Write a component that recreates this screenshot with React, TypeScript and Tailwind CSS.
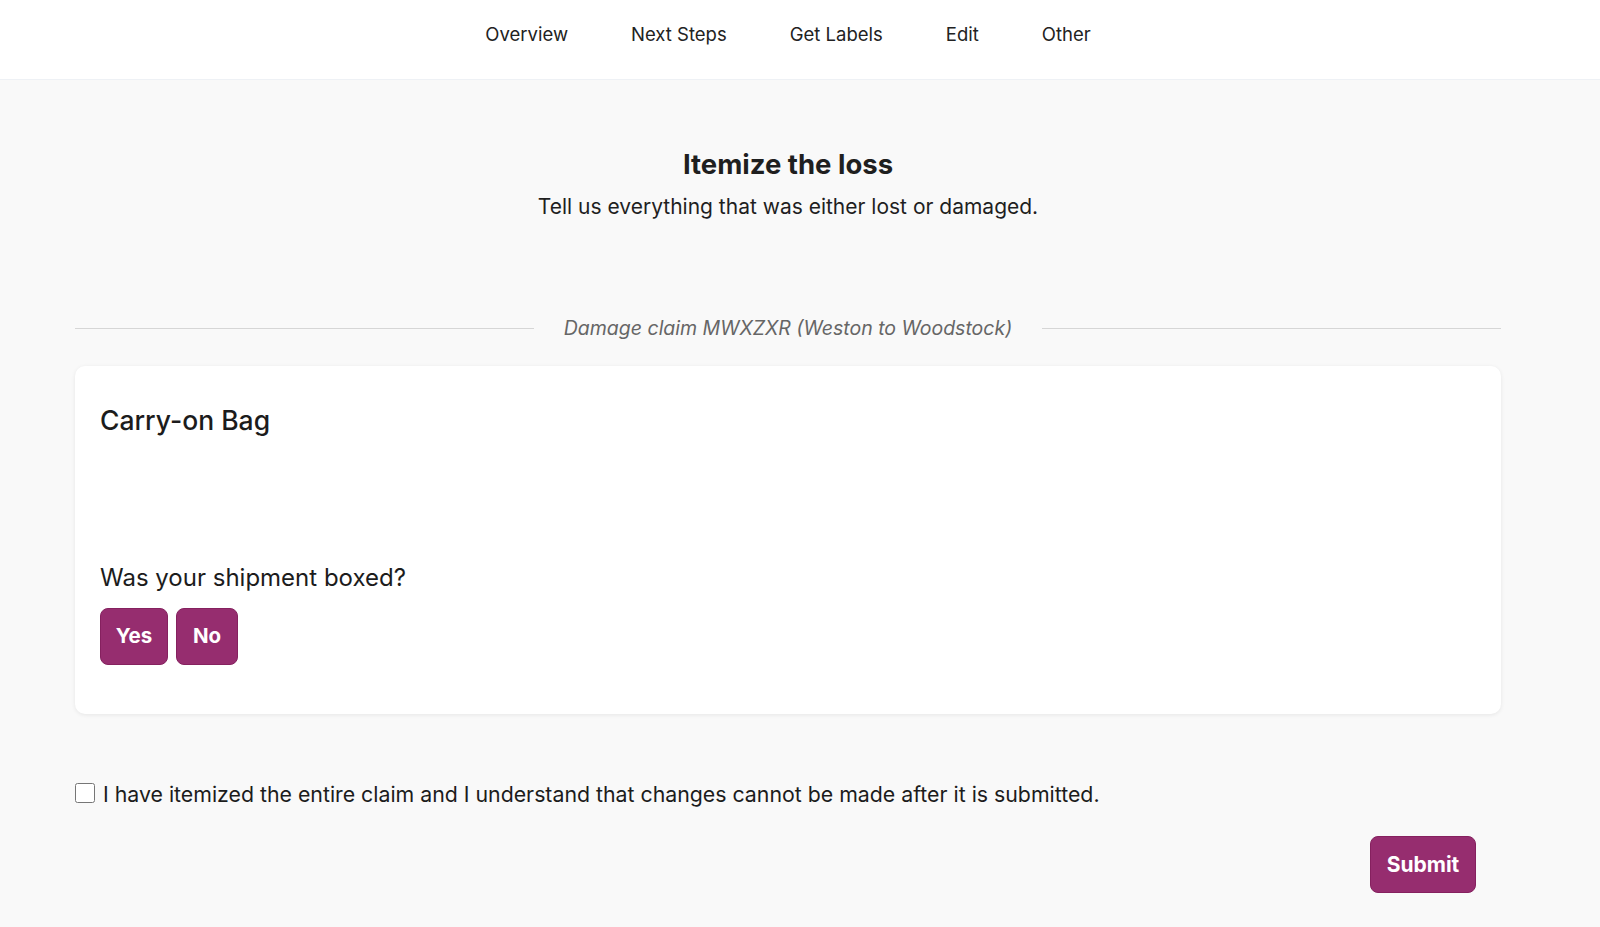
import { useState } from 'react';

const navItems = ['Overview', 'Next Steps', 'Get Labels', 'Edit', 'Other'];

export default function App() {
  const [agreed, setAgreed] = useState(false);

  return (
    <div className="min-h-[927px] bg-[#f9f9f9] text-[#1c1c1c]" style={{ fontFamily: 'Inter, "Noto Sans", sans-serif' }}>
      <header className="h-[80px] bg-white border-b border-[#eef1f5]">
        <nav className="w-[1576px] h-full flex items-start justify-center gap-[63px] pt-[22px]">
          {navItems.map((item) => (
            <a key={item} href="#" className="text-[18.5px] leading-[24px] text-[#222]">
              {item}
            </a>
          ))}
        </nav>
      </header>

      <main className="w-[1576px] px-[75px]">
        <div className="pt-[67px] text-center">
          <h1 className="text-[27.5px] leading-[34px] font-bold text-[#1f1f1f]">Itemize the loss</h1>
          <p className="mt-[12px] text-[21px] leading-[28px] text-[#1f1f1f]">
            Tell us everything that was either lost or damaged.
          </p>
        </div>

        <div className="mt-[94px] flex items-center gap-[30px]">
          <div className="flex-1 h-px bg-[#d6d6d6]" />
          <span className="text-[19.5px] leading-[26px] italic text-[#666]">
            Damage claim MWXZXR (Weston to Woodstock)
          </span>
          <div className="flex-1 h-px bg-[#d6d6d6]" />
        </div>

        <section className="mt-[25px] h-[348px] bg-white rounded-[10px] shadow-[0_1px_4px_rgba(0,0,0,0.08)] px-[25px] pt-[37px]">
          <h2 className="text-[26.5px] leading-[34px] font-medium text-[#1c1c1c]">Carry-on Bag</h2>
          <p className="mt-[125px] text-[24px] leading-[32px] text-[#1c1c1c]">Was your shipment boxed?</p>
          <div className="mt-[14px] flex gap-[8px]">
            <button className="w-[68px] h-[57px] rounded-[8px] bg-[#962d6f] border border-[#85215f] text-white text-[20.5px] font-bold">
              Yes
            </button>
            <button className="w-[62px] h-[57px] rounded-[8px] bg-[#962d6f] border border-[#85215f] text-white text-[20.5px] font-bold">
              No
            </button>
          </div>
        </section>

        <label className="mt-[66px] flex items-center gap-[8px] cursor-pointer">
          <input
            type="checkbox"
            checked={agreed}
            onChange={(e) => setAgreed(e.target.checked)}
            className="w-[20px] h-[20px] -mt-[3px]"
          />
          <span className="text-[21.3px] leading-[28px] text-[#1c1c1c]">
            I have itemized the entire claim and I understand that changes cannot be made after it is submitted.
          </span>
        </label>

        <div className="mt-[28px] flex justify-end pr-[25px]">
          <button className="w-[106px] h-[57px] rounded-[8px] bg-[#962d6f] border border-[#85215f] text-white text-[21px] font-bold">
            Submit
          </button>
        </div>
      </main>
    </div>
  );
}
